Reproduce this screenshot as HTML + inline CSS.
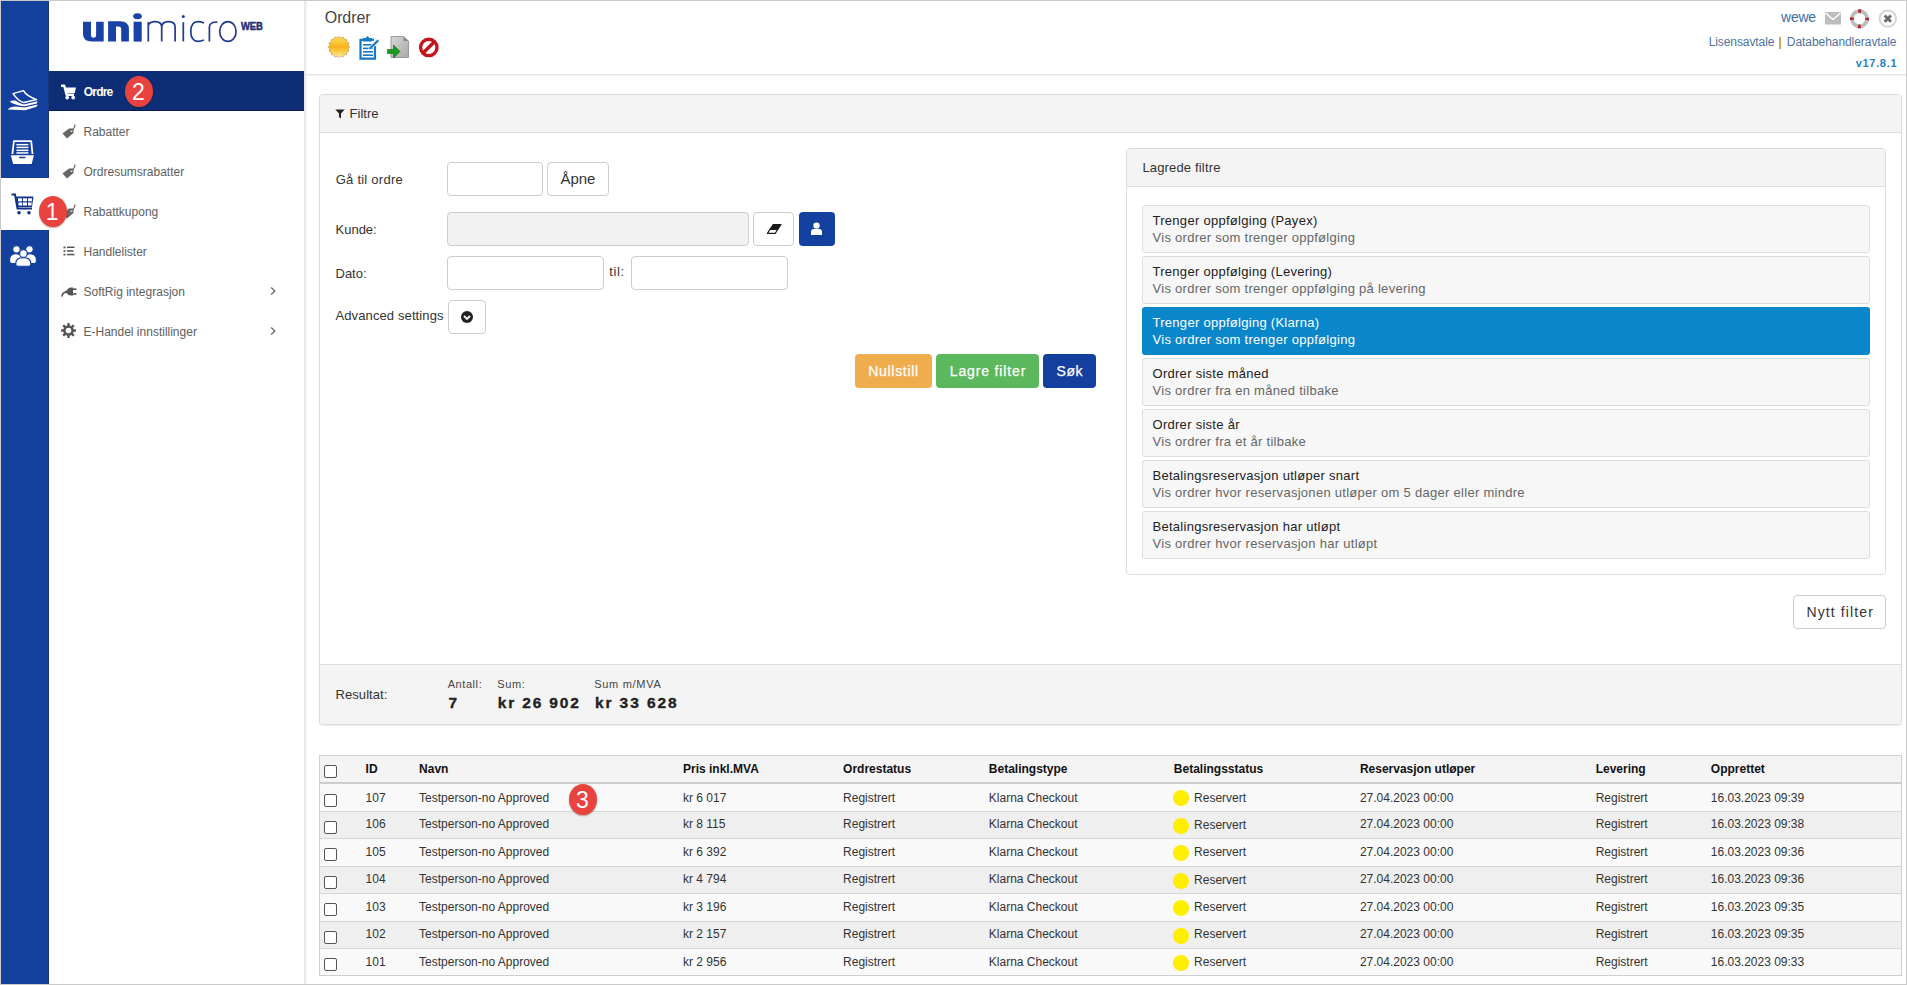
<!DOCTYPE html><html><head><meta charset="utf-8"><style>*{margin:0;padding:0}
html,body{width:1907px;height:985px;overflow:hidden;background:#fff;font-family:"Liberation Sans",sans-serif;}
.t{position:absolute;white-space:nowrap;line-height:1;}
.r{position:absolute;display:block;}
</style></head><body>
<div class="r" style="left:0px;top:0px;width:1907px;height:985px;border:1px solid #c9c9c9;box-sizing:border-box;background:#fff;"></div>
<div class="r" style="left:1px;top:1px;width:48px;height:983px;background:#133f9d;"></div>
<div class="r" style="left:48px;top:1px;width:1px;height:983px;background:#1a3778;"></div>
<div class="r" style="left:1px;top:178px;width:48px;height:52px;background:#fff;"></div>
<svg class="r" style="left:7px;top:88px;" width="32" height="24" viewBox="0 0 32 24"><path d="M6.1 5.6 L16.5 2.6 Q18.8 7.5 29.6 11.6 L16.8 14.6 Q10.5 12.5 6.1 5.6 Z" fill="none" stroke="#fff" stroke-width="1.5" stroke-linejoin="round"/>
<path d="M2.6 13.8 Q4.5 12.2 8.5 12.6 Q12 15.6 16.8 16.4 L30.6 13.2 L29.8 15.6 L17.6 18.3 Q9 17.5 2.6 13.8 Z" fill="#fff"/>
<path d="M0.8 21.4 Q3.5 18.6 8.5 18.6 L17.6 19.6 L30.6 16.6 L29.6 18.8 L18.2 22.2 Z" fill="#fff"/></svg>
<svg class="r" style="left:10px;top:140px;" width="25" height="25" viewBox="0 0 25 25"><path d="M2.4 14 L3.9 1.1 H21.2 L22.5 14" fill="none" stroke="#fff" stroke-width="1.8" stroke-linejoin="round"/>
<g fill="#fff"><rect x="6.4" y="3.9" width="12" height="1.5"/><rect x="6.4" y="6.7" width="12" height="1.5"/><rect x="6.4" y="9.6" width="12" height="1.5"/><rect x="6.4" y="12.2" width="12" height="1.5"/></g>
<path d="M0.9 15.2 H23.9 L21.7 23.9 H3.1 Z" fill="#fff"/><rect x="9" y="16.8" width="6.5" height="1.4" rx="0.6" fill="#1a3c8a"/></svg>
<svg class="r" style="left:10px;top:192px;" width="25" height="25" viewBox="0 0 25 25"><path d="M1.5 2.5 H5 L7.5 16.5 H22" fill="none" stroke="#13338a" stroke-width="2"/>
<path d="M6 4.5 H23.5 L22 15 H7.5 Z" fill="#13338a"/>
<g fill="#fff"><rect x="8" y="6.3" width="4" height="3"/><rect x="13" y="6.3" width="4" height="3"/><rect x="18" y="6.3" width="4" height="3"/>
<rect x="8.5" y="10.5" width="3.8" height="3"/><rect x="13" y="10.5" width="4" height="3"/><rect x="18" y="10.5" width="3.6" height="3"/></g>
<circle cx="9" cy="20.8" r="1.8" fill="#13338a"/><circle cx="19" cy="20.8" r="1.8" fill="#13338a"/></svg>
<svg class="r" style="left:9px;top:245px;" width="28" height="22" viewBox="0 0 28 22"><g fill="#fff" stroke="#133f9d" stroke-width="1.1">
<circle cx="7.5" cy="4.3" r="3.7"/><circle cx="20.5" cy="4.3" r="3.7"/>
<path d="M0.6 16.6 Q0.6 18.6 2.6 18.6 H13 V13.5 Q12 8.8 7 8.8 Q0.6 8.8 0.6 15 Z"/>
<path d="M27.4 16.6 Q27.4 18.6 25.4 18.6 H15 V13.5 Q16 8.8 21 8.8 Q27.4 8.8 27.4 15 Z"/>
<circle cx="14.4" cy="8.6" r="3.8"/>
<path d="M6.8 19.4 Q6.8 21.3 9 21.3 H19.6 Q21.8 21.3 21.8 19.4 V18.5 Q21.8 12.6 14.3 12.6 Q6.8 12.6 6.8 18.5 Z"/></g></svg>
<div class="r" style="left:49px;top:1px;width:255px;height:983px;background:#fff;"></div>
<div class="r" style="left:304px;top:1px;width:4px;height:983px;background:linear-gradient(to right,#e2e2e2,#f4f4f4 60%,#fff);"></div>
<svg class="r" style="left:0px;top:0px;" width="300" height="60" viewBox="0 0 300 60"><g fill="#1842a6">
<path d="M83 21.7 H91 V35 Q91 37.7 93.5 37.7 Q96.1 37.7 96.1 35 V21.7 H103.7 V41.6 H92 Q83 41.6 83 34 Z"/>
<path d="M108.1 41.6 V21.3 H120 Q128.9 21.3 128.9 29 V41.6 H121.2 V29 Q121.2 26.5 118.5 26.5 H116 V41.6 Z"/>
<rect x="133.6" y="21.7" width="8.1" height="19.9"/><ellipse cx="137.5" cy="16.2" rx="4.3" ry="3"/>
</g>
<g fill="none" stroke="#1e3a8c" stroke-width="1.7">
<path d="M148.3 41.4 V22 M148.3 25 Q150 21.6 155 21.6 Q161.7 21.6 161.7 27 V41.4 M161.7 27 Q162 21.6 168.5 21.6 Q175.1 21.6 175.1 27 V41.4"/>
<path d="M183.3 22.3 V41.4"/>
<path d="M204 23 Q201 21.6 198 21.6 Q190.8 21.6 190.8 31.5 Q190.8 41.3 198 41.3 Q201 41.3 204 40"/>
<path d="M209.4 41.4 V27 Q209.4 22 217.5 22"/>
<ellipse cx="227.9" cy="31.5" rx="8.2" ry="9.9"/>
</g>
<circle cx="183.3" cy="16.5" r="1.5" fill="#1e3a8c"/><text x="240.9" y="30.2" font-family="Liberation Sans" font-weight="bold" font-size="11.6" fill="#1f3276" stroke="#1f3276" stroke-width="0.55" textLength="22" lengthAdjust="spacingAndGlyphs">WEB</text></svg>
<div class="r" style="left:49px;top:71px;width:255px;height:40px;background:#0d2e76;"></div>
<div class="r" style="left:49px;top:109px;width:255px;height:1px;background:#132a6c;"></div>
<div class="r" style="left:49px;top:110px;width:255px;height:1px;background:#081d50;"></div>
<svg class="r" style="left:60px;top:84px;" width="17" height="16" viewBox="0 0 17 16"><path d="M1 1.8 H4.2 L6.6 10.8 H14" fill="none" stroke="#fff" stroke-width="2.4" stroke-linejoin="round"/>
<path d="M4.5 3.5 H16 L14.8 9 H5.8 Z" fill="#fff"/><circle cx="7.2" cy="13.6" r="1.9" fill="#fff"/><circle cx="13.2" cy="13.6" r="1.9" fill="#fff"/></svg>
<div class="t" style="left:83.70px;top:85.84px;font-size:12px;color:#fff;font-weight:bold;letter-spacing:-0.769px;">Ordre</div>
<div class="t" style="left:83.50px;top:125.84px;font-size:12px;color:#606060;">Rabatter</div>
<svg class="r" style="left:60.5px;top:124px;" width="16" height="16" viewBox="0 0 16 16"><path d="M1.5 9.5 L8 4.5 H12.5 V9 L6 14.5 Z" fill="#666"/><circle cx="10.5" cy="7" r="1" fill="#fff"/><path d="M10.5 7 Q14 4 14 0.5" fill="none" stroke="#666" stroke-width="1.1"/></svg>
<div class="t" style="left:83.50px;top:165.84px;font-size:12px;color:#606060;">Ordresumsrabatter</div>
<svg class="r" style="left:60.5px;top:164px;" width="16" height="16" viewBox="0 0 16 16"><path d="M1.5 9.5 L8 4.5 H12.5 V9 L6 14.5 Z" fill="#666"/><circle cx="10.5" cy="7" r="1" fill="#fff"/><path d="M10.5 7 Q14 4 14 0.5" fill="none" stroke="#666" stroke-width="1.1"/></svg>
<div class="t" style="left:83.50px;top:205.84px;font-size:12px;color:#606060;">Rabattkupong</div>
<svg class="r" style="left:60.5px;top:204px;" width="16" height="16" viewBox="0 0 16 16"><path d="M1.5 9.5 L8 4.5 H12.5 V9 L6 14.5 Z" fill="#666"/><circle cx="10.5" cy="7" r="1" fill="#fff"/><path d="M10.5 7 Q14 4 14 0.5" fill="none" stroke="#666" stroke-width="1.1"/></svg>
<div class="t" style="left:83.50px;top:245.84px;font-size:12px;color:#606060;">Handlelister</div>
<svg class="r" style="left:63px;top:246px;" width="12" height="10" viewBox="0 0 12 10"><g fill="#555"><rect x="0.5" y="0.5" width="2" height="1.8"/><rect x="0.5" y="4.1" width="2" height="1.8"/><rect x="0.5" y="7.7" width="2" height="1.8"/>
<rect x="4" y="0.5" width="7.5" height="1.5"/><rect x="4" y="4.2" width="6.5" height="1.5"/><rect x="4" y="7.8" width="7.5" height="1.5"/></g></svg>
<div class="t" style="left:83.50px;top:285.84px;font-size:12px;color:#606060;">SoftRig integrasjon</div>
<svg class="r" style="left:61px;top:286px;" width="16" height="11" viewBox="0 0 16 11"><path d="M1 10 Q1.5 6.5 5 6" fill="none" stroke="#555" stroke-width="1.6" stroke-linecap="round"/><path d="M4.5 4.5 H6 Q7 1.5 10 1.5 H12 V9.5 H10 Q7 9.5 6 7.2 H4.5 Z" fill="#555"/><rect x="12" y="2.4" width="3.5" height="1.6" fill="#555"/><rect x="12" y="7.2" width="3.5" height="1.6" fill="#555"/></svg>
<div class="t" style="left:83.50px;top:325.84px;font-size:12px;color:#606060;">E-Handel innstillinger</div>
<svg class="r" style="left:61px;top:323px;" width="15" height="15" viewBox="0 0 15 15"><g fill="#555"><rect x="6.3" y="0" width="2.4" height="4" rx="0.5" transform="rotate(0 7.5 7.5)"/><rect x="6.3" y="0" width="2.4" height="4" rx="0.5" transform="rotate(45 7.5 7.5)"/><rect x="6.3" y="0" width="2.4" height="4" rx="0.5" transform="rotate(90 7.5 7.5)"/><rect x="6.3" y="0" width="2.4" height="4" rx="0.5" transform="rotate(135 7.5 7.5)"/><rect x="6.3" y="0" width="2.4" height="4" rx="0.5" transform="rotate(180 7.5 7.5)"/><rect x="6.3" y="0" width="2.4" height="4" rx="0.5" transform="rotate(225 7.5 7.5)"/><rect x="6.3" y="0" width="2.4" height="4" rx="0.5" transform="rotate(270 7.5 7.5)"/><rect x="6.3" y="0" width="2.4" height="4" rx="0.5" transform="rotate(315 7.5 7.5)"/><circle cx="7.5" cy="7.5" r="5.3"/></g><circle cx="7.5" cy="7.5" r="2.8" fill="#fff"/></svg>
<svg class="r" style="left:269px;top:286px;" width="8" height="10" viewBox="0 0 8 10"><path d="M2.2 1.5 L5.8 5 L2.2 8.5" fill="none" stroke="#6a6a6a" stroke-width="1.4"/></svg>
<svg class="r" style="left:269px;top:326px;" width="8" height="10" viewBox="0 0 8 10"><path d="M2.2 1.5 L5.8 5 L2.2 8.5" fill="none" stroke="#6a6a6a" stroke-width="1.4"/></svg>
<div class="t" style="left:324.80px;top:10.46px;font-size:16px;color:#444;letter-spacing:-0.104px;">Ordrer</div>
<svg class="r" style="left:328px;top:36px;" width="22" height="22" viewBox="0 0 22 22"><defs><linearGradient id="sg" x1="0" y1="0" x2="0" y2="1"><stop offset="0" stop-color="#ffe05c"/><stop offset="0.5" stop-color="#f7b21c"/><stop offset="0.8" stop-color="#fcd860"/><stop offset="1" stop-color="#fff4c0"/></linearGradient></defs>
<polygon points="21.80,11.00 20.12,12.81 20.98,15.13 18.73,16.17 18.64,18.64 16.17,18.73 15.13,20.98 12.81,20.12 11.00,21.80 9.19,20.12 6.87,20.98 5.83,18.73 3.36,18.64 3.27,16.17 1.02,15.13 1.88,12.81 0.20,11.00 1.88,9.19 1.02,6.87 3.27,5.83 3.36,3.36 5.83,3.27 6.87,1.02 9.19,1.88 11.00,0.20 12.81,1.88 15.13,1.02 16.17,3.27 18.64,3.36 18.73,5.83 20.98,6.87 20.12,9.19" fill="url(#sg)" stroke="#c99a52" stroke-width="0.7"/></svg>
<svg class="r" style="left:358px;top:36px;" width="22" height="24" viewBox="0 0 22 24"><g fill="none" stroke="#1479c4" stroke-width="2.2">
<path d="M6 3.8 H2.5 V22.6 H17 V10"/><path d="M13 3.8 H16"/>
</g><path d="M5 2 H14 V5.5 H5 Z" fill="#1479c4"/><circle cx="9.5" cy="1.5" r="1.3" fill="#1479c4"/>
<g fill="#1479c4"><rect x="5" y="8" width="9" height="1.6"/><rect x="5" y="11.6" width="10" height="1.6"/><rect x="5" y="15" width="10" height="1.6"/><rect x="5" y="18.4" width="10" height="1.6"/></g>
<path d="M11 11.5 L19.5 3 L21.5 5 L13 13.5 L10.5 14 Z" fill="#1479c4" stroke="#fff" stroke-width="0.8"/></svg>
<svg class="r" style="left:387px;top:36px;" width="22" height="24" viewBox="0 0 22 24"><defs><linearGradient id="dg" x1="0" y1="0" x2="1" y2="1"><stop offset="0" stop-color="#d8d8d8"/><stop offset="1" stop-color="#a9a9a9"/></linearGradient></defs>
<path d="M4 0.5 H16.5 L21.5 5 V21.5 H4 Z" fill="url(#dg)" stroke="#8a8a8a" stroke-width="0.8"/><path d="M16.5 0.5 V5 H21.5" fill="#888"/>
<path d="M0.5 13.5 H6.5 V9 L13 15.5 L6.5 22 V17.5 H0.5 Z" fill="#1c9a1c" stroke="#0d6a0d" stroke-width="0.6"/></svg>
<svg class="r" style="left:418px;top:37px;" width="22" height="21" viewBox="0 0 22 21"><circle cx="10.8" cy="10.4" r="8.2" fill="none" stroke="#c4161c" stroke-width="3.4"/><path d="M5 16 L16.5 4.8" stroke="#c4161c" stroke-width="3.4"/></svg>
<div class="r" style="left:305px;top:74px;width:1601px;height:1px;background:#e6e6e6;"></div>
<div class="r" style="left:305px;top:75px;width:1601px;height:1px;background:#f3f3f3;"></div>
<div class="t" style="left:1781.10px;top:10.15px;font-size:14px;color:#3d6ea6;letter-spacing:-0.264px;">wewe</div>
<svg class="r" style="left:1825px;top:12px;" width="16" height="13" viewBox="0 0 16 13"><rect x="0" y="0" width="16" height="12.5" fill="#bdbdbd"/><path d="M0.5 1 L8 7.5 L15.5 1" fill="none" stroke="#fff" stroke-width="1.4"/></svg>
<svg class="r" style="left:1849px;top:9px;" width="21" height="20" viewBox="0 0 21 20"><circle cx="10.5" cy="9.8" r="7.6" fill="none" stroke="#bcbcbc" stroke-width="3.8"/>
<circle cx="10.5" cy="9.8" r="7.6" fill="none" stroke="#b3252a" stroke-width="3.8" stroke-dasharray="2.8 9.14" stroke-dashoffset="1.4"/></svg>
<svg class="r" style="left:1878px;top:9px;" width="20" height="20" viewBox="0 0 20 20"><circle cx="9.8" cy="9.6" r="8.2" fill="#fff" stroke="#d4d4d4" stroke-width="2"/><path d="M6.6 6.4 L13 12.8 M13 6.4 L6.6 12.8" stroke="#6a6a6a" stroke-width="2.8"/></svg>
<div class="t" style="left:1708.70px;top:35.84px;font-size:12px;color:#4f72a0;letter-spacing:-0.091px;">Lisensavtale</div>
<div class="r" style="left:1779px;top:37px;width:2px;height:12px;background:#d1a75a;"></div>
<div class="t" style="left:1786.80px;top:35.84px;font-size:12px;color:#4f72a0;letter-spacing:-0.058px;">Databehandleravtale</div>
<div class="t" style="left:1855.80px;top:57.69px;font-size:11px;color:#2b7fc1;font-weight:bold;letter-spacing:0.667px;">v17.8.1</div>
<div class="r" style="left:319px;top:94px;width:1583px;height:631px;background:#fff;border:1px solid #dadada;border-radius:4px;box-sizing:border-box;box-shadow:0 1px 2px rgba(0,0,0,0.08);"></div>
<div class="r" style="left:320px;top:95px;width:1581px;height:37px;background:#f4f4f4;border-radius:3px 3px 0 0;"></div>
<div class="r" style="left:320px;top:132px;width:1581px;height:1px;background:#dcdcdc;"></div>
<svg class="r" style="left:335px;top:109px;" width="10" height="10" viewBox="0 0 10 10"><path d="M0.3 0.5 H9.7 L6 4.5 V9.5 L4 8 V4.5 Z" fill="#222"/></svg>
<div class="t" style="left:349.50px;top:107.00px;font-size:13px;color:#333;letter-spacing:0.023px;">Filtre</div>
<div class="r" style="left:320px;top:664px;width:1581px;height:1px;background:#dcdcdc;"></div>
<div class="r" style="left:320px;top:665px;width:1581px;height:59px;background:#f4f4f4;border-radius:0 0 3px 3px;"></div>
<div class="t" style="left:335.70px;top:173.00px;font-size:13px;color:#333;letter-spacing:0.246px;">Gå til ordre</div>
<div class="r" style="left:447px;top:162px;width:96px;height:34px;background:#fff;border:1px solid #ccc;border-radius:4px;box-sizing:border-box;"></div>
<div class="r" style="left:547px;top:162px;width:62px;height:34px;background:#fff;border:1px solid #ccc;border-radius:4px;box-sizing:border-box;"></div>
<div class="t" style="left:560.40px;top:171.30px;font-size:15px;color:#333;letter-spacing:-0.010px;">Åpne</div>
<div class="t" style="left:335.50px;top:223.00px;font-size:13px;color:#333;">Kunde:</div>
<div class="r" style="left:447px;top:212px;width:302px;height:34px;background:#f2f2f2;border:1px solid #ccc;border-radius:4px;box-sizing:border-box;"></div>
<div class="r" style="left:753px;top:212px;width:41px;height:34px;background:#fff;border:1px solid #ccc;border-radius:4px;box-sizing:border-box;"></div>
<svg class="r" style="left:765px;top:223px;" width="18" height="12" viewBox="0 0 18 12"><path d="M8.2 1.5 H16 L10.2 10.3 H2.4 Z" fill="#fff" stroke="#1a1a1a" stroke-width="1.2" stroke-linejoin="round"/><path d="M8.2 1.5 H16 L12.3 7 H4.6 Z" fill="#1a1a1a"/></svg>
<div class="r" style="left:799px;top:212px;width:36px;height:34px;background:#1440a0;border-radius:4px;"></div>
<svg class="r" style="left:810px;top:222px;" width="13" height="14" viewBox="0 0 13 14"><circle cx="6.5" cy="3.6" r="3.2" fill="#fff"/><path d="M1 13 V10 Q1 7 4 7 H9 Q12 7 12 10 V13 Z" fill="#fff"/></svg>
<div class="t" style="left:335.50px;top:267.00px;font-size:13px;color:#333;">Dato:</div>
<div class="r" style="left:447px;top:256px;width:157px;height:34px;background:#fff;border:1px solid #ccc;border-radius:4px;box-sizing:border-box;"></div>
<div class="t" style="left:609.20px;top:265.00px;font-size:13px;color:#333;letter-spacing:0.600px;">til:</div>
<div class="r" style="left:631px;top:256px;width:157px;height:34px;background:#fff;border:1px solid #ccc;border-radius:4px;box-sizing:border-box;"></div>
<div class="t" style="left:335.50px;top:309.00px;font-size:13px;color:#333;letter-spacing:0.111px;">Advanced settings</div>
<div class="r" style="left:448px;top:300px;width:38px;height:34px;background:#fff;border:1px solid #ccc;border-radius:4px;box-sizing:border-box;"></div>
<svg class="r" style="left:460px;top:310px;" width="14" height="14" viewBox="0 0 14 14"><circle cx="7" cy="7" r="6" fill="#222"/><path d="M4 6 L7 9 L10 6" fill="none" stroke="#fff" stroke-width="1.8"/></svg>
<div class="r" style="left:855px;top:354px;width:77px;height:34px;background:#f0ad4e;border-radius:4px;"></div>
<div class="t" style="left:868.20px;top:364.15px;font-size:14px;color:#fff;letter-spacing:0.708px;-webkit-text-stroke:0.25px #fff;">Nullstill</div>
<div class="r" style="left:936px;top:354px;width:103px;height:34px;background:#5cb85c;border-radius:4px;"></div>
<div class="t" style="left:949.80px;top:364.15px;font-size:14px;color:#fff;letter-spacing:0.851px;-webkit-text-stroke:0.25px #fff;">Lagre filter</div>
<div class="r" style="left:1043px;top:354px;width:53px;height:34px;background:#143f9e;border-radius:4px;"></div>
<div class="t" style="left:1056.60px;top:364.15px;font-size:14px;color:#fff;letter-spacing:0.555px;-webkit-text-stroke:0.25px #fff;">Søk</div>
<div class="r" style="left:1126px;top:148px;width:760px;height:427px;background:#fff;border:1px solid #dcdcdc;border-radius:4px;box-sizing:border-box;"></div>
<div class="r" style="left:1127px;top:149px;width:758px;height:37px;background:#f4f4f4;border-radius:3px 3px 0 0;"></div>
<div class="r" style="left:1127px;top:186px;width:758px;height:1px;background:#dcdcdc;"></div>
<div class="t" style="left:1142.40px;top:161.00px;font-size:13px;color:#333;letter-spacing:0.164px;">Lagrede filtre</div>
<div class="r" style="left:1142px;top:205px;width:728px;height:48px;background:#f7f7f7;border:1px solid #dddddd;border-radius:3px;box-sizing:border-box;"></div>
<div class="t" style="left:1152.50px;top:214.00px;font-size:13px;color:#222;letter-spacing:0.28px;">Trenger oppfølging (Payex)</div>
<div class="t" style="left:1152.50px;top:230.50px;font-size:13px;color:#666;letter-spacing:0.28px;">Vis ordrer som trenger oppfølging</div>
<div class="r" style="left:1142px;top:256px;width:728px;height:48px;background:#f7f7f7;border:1px solid #dddddd;border-radius:3px;box-sizing:border-box;"></div>
<div class="t" style="left:1152.50px;top:265.00px;font-size:13px;color:#222;letter-spacing:0.28px;">Trenger oppfølging (Levering)</div>
<div class="t" style="left:1152.50px;top:281.50px;font-size:13px;color:#666;letter-spacing:0.28px;">Vis ordrer som trenger oppfølging på levering</div>
<div class="r" style="left:1142px;top:307px;width:728px;height:48px;background:#0a87cb;border-radius:3px;"></div>
<div class="t" style="left:1152.50px;top:316.00px;font-size:13px;color:#fff;letter-spacing:0.28px;">Trenger oppfølging (Klarna)</div>
<div class="t" style="left:1152.50px;top:332.50px;font-size:13px;color:#fff;letter-spacing:0.28px;">Vis ordrer som trenger oppfølging</div>
<div class="r" style="left:1142px;top:358px;width:728px;height:48px;background:#f7f7f7;border:1px solid #dddddd;border-radius:3px;box-sizing:border-box;"></div>
<div class="t" style="left:1152.50px;top:367.00px;font-size:13px;color:#222;letter-spacing:0.28px;">Ordrer siste måned</div>
<div class="t" style="left:1152.50px;top:383.50px;font-size:13px;color:#666;letter-spacing:0.28px;">Vis ordrer fra en måned tilbake</div>
<div class="r" style="left:1142px;top:409px;width:728px;height:48px;background:#f7f7f7;border:1px solid #dddddd;border-radius:3px;box-sizing:border-box;"></div>
<div class="t" style="left:1152.50px;top:418.00px;font-size:13px;color:#222;letter-spacing:0.28px;">Ordrer siste år</div>
<div class="t" style="left:1152.50px;top:434.50px;font-size:13px;color:#666;letter-spacing:0.28px;">Vis ordrer fra et år tilbake</div>
<div class="r" style="left:1142px;top:460px;width:728px;height:48px;background:#f7f7f7;border:1px solid #dddddd;border-radius:3px;box-sizing:border-box;"></div>
<div class="t" style="left:1152.50px;top:469.00px;font-size:13px;color:#222;letter-spacing:0.28px;">Betalingsreservasjon utløper snart</div>
<div class="t" style="left:1152.50px;top:485.50px;font-size:13px;color:#666;letter-spacing:0.28px;">Vis ordrer hvor reservasjonen utløper om 5 dager eller mindre</div>
<div class="r" style="left:1142px;top:511px;width:728px;height:48px;background:#f7f7f7;border:1px solid #dddddd;border-radius:3px;box-sizing:border-box;"></div>
<div class="t" style="left:1152.50px;top:520.00px;font-size:13px;color:#222;letter-spacing:0.28px;">Betalingsreservasjon har utløpt</div>
<div class="t" style="left:1152.50px;top:536.50px;font-size:13px;color:#666;letter-spacing:0.28px;">Vis ordrer hvor reservasjon har utløpt</div>
<div class="r" style="left:1793px;top:595px;width:93px;height:34px;background:#fff;border:1px solid #ccc;border-radius:4px;box-sizing:border-box;"></div>
<div class="t" style="left:1806.40px;top:605.15px;font-size:14px;color:#333;letter-spacing:1.127px;">Nytt filter</div>
<div class="t" style="left:335.60px;top:688.00px;font-size:13px;color:#333;letter-spacing:0.050px;">Resultat:</div>
<div class="t" style="left:447.70px;top:678.69px;font-size:11px;color:#444;letter-spacing:0.571px;">Antall:</div>
<div class="t" style="left:497.30px;top:678.69px;font-size:11px;color:#444;letter-spacing:0.642px;">Sum:</div>
<div class="t" style="left:594.20px;top:678.69px;font-size:11px;color:#444;letter-spacing:0.711px;">Sum m/MVA</div>
<div class="t" style="left:448.40px;top:695.08px;font-size:15.5px;color:#222;font-weight:bold;-webkit-text-stroke:0.35px #222;">7</div>
<div class="t" style="left:497.70px;top:695.08px;font-size:15.5px;color:#222;font-weight:bold;letter-spacing:1.855px;-webkit-text-stroke:0.35px #222;">kr 26 902</div>
<div class="t" style="left:594.90px;top:695.08px;font-size:15.5px;color:#222;font-weight:bold;letter-spacing:1.917px;-webkit-text-stroke:0.35px #222;">kr 33 628</div>
<div class="r" style="left:319px;top:755px;width:1583px;height:221px;background:#fff;border:1px solid #cfcfcf;box-sizing:border-box;"></div>
<div class="r" style="left:320px;top:756px;width:1581px;height:26px;background:#f4f4f4;"></div>
<div class="r" style="left:320px;top:782px;width:1581px;height:2px;background:#cdcdcd;"></div>
<div class="r" style="left:324px;top:765px;width:13px;height:13px;background:#fff;border:1px solid #555;border-radius:2px;box-sizing:border-box;"></div>
<div class="t" style="left:365.60px;top:762.84px;font-size:12px;color:#111;font-weight:bold;">ID</div>
<div class="t" style="left:419.10px;top:762.84px;font-size:12px;color:#111;font-weight:bold;">Navn</div>
<div class="t" style="left:683.00px;top:762.84px;font-size:12px;color:#111;font-weight:bold;">Pris inkl.MVA</div>
<div class="t" style="left:843.10px;top:762.84px;font-size:12px;color:#111;font-weight:bold;">Ordrestatus</div>
<div class="t" style="left:988.80px;top:762.84px;font-size:12px;color:#111;font-weight:bold;">Betalingstype</div>
<div class="t" style="left:1173.80px;top:762.84px;font-size:12px;color:#111;font-weight:bold;">Betalingsstatus</div>
<div class="t" style="left:1359.90px;top:762.84px;font-size:12px;color:#111;font-weight:bold;">Reservasjon utløper</div>
<div class="t" style="left:1595.70px;top:762.84px;font-size:12px;color:#111;font-weight:bold;">Levering</div>
<div class="t" style="left:1710.80px;top:762.84px;font-size:12px;color:#111;font-weight:bold;">Opprettet</div>
<div class="r" style="left:320px;top:784px;width:1581px;height:27px;background:#f9f9f9;"></div>
<div class="r" style="left:320px;top:811px;width:1581px;height:1px;background:#d6d6d6;"></div>
<div class="r" style="left:324px;top:793.5px;width:13px;height:13.0px;background:#fff;border:1px solid #555;border-radius:2px;box-sizing:border-box;"></div>
<div class="t" style="left:365.60px;top:791.64px;font-size:12px;color:#333;">107</div>
<div class="t" style="left:419.10px;top:791.64px;font-size:12px;color:#333;">Testperson-no Approved</div>
<div class="t" style="left:683.00px;top:791.64px;font-size:12px;color:#333;">kr 6 017</div>
<div class="t" style="left:843.10px;top:791.64px;font-size:12px;color:#333;">Registrert</div>
<div class="t" style="left:988.80px;top:791.64px;font-size:12px;color:#333;">Klarna Checkout</div>
<div class="r" style="left:1173px;top:790px;width:16px;height:16px;background:#ffee00;border-radius:50%;"></div>
<div class="t" style="left:1194.10px;top:792.14px;font-size:12px;color:#333;">Reservert</div>
<div class="t" style="left:1359.90px;top:791.64px;font-size:12px;color:#333;">27.04.2023 00:00</div>
<div class="t" style="left:1595.70px;top:791.64px;font-size:12px;color:#333;">Registrert</div>
<div class="t" style="left:1710.80px;top:791.64px;font-size:12px;color:#333;">16.03.2023 09:39</div>
<div class="r" style="left:320px;top:812px;width:1581px;height:26px;background:#efefef;"></div>
<div class="r" style="left:320px;top:838px;width:1581px;height:1px;background:#d6d6d6;"></div>
<div class="r" style="left:324px;top:821px;width:13px;height:13px;background:#fff;border:1px solid #555;border-radius:2px;box-sizing:border-box;"></div>
<div class="t" style="left:365.60px;top:818.34px;font-size:12px;color:#333;">106</div>
<div class="t" style="left:419.10px;top:818.34px;font-size:12px;color:#333;">Testperson-no Approved</div>
<div class="t" style="left:683.00px;top:818.34px;font-size:12px;color:#333;">kr 8 115</div>
<div class="t" style="left:843.10px;top:818.34px;font-size:12px;color:#333;">Registrert</div>
<div class="t" style="left:988.80px;top:818.34px;font-size:12px;color:#333;">Klarna Checkout</div>
<div class="r" style="left:1173px;top:818px;width:16px;height:16px;background:#ffee00;border-radius:50%;"></div>
<div class="t" style="left:1194.10px;top:818.84px;font-size:12px;color:#333;">Reservert</div>
<div class="t" style="left:1359.90px;top:818.34px;font-size:12px;color:#333;">27.04.2023 00:00</div>
<div class="t" style="left:1595.70px;top:818.34px;font-size:12px;color:#333;">Registrert</div>
<div class="t" style="left:1710.80px;top:818.34px;font-size:12px;color:#333;">16.03.2023 09:38</div>
<div class="r" style="left:320px;top:839px;width:1581px;height:27px;background:#f9f9f9;"></div>
<div class="r" style="left:320px;top:866px;width:1581px;height:1px;background:#d6d6d6;"></div>
<div class="r" style="left:324px;top:848px;width:13px;height:13px;background:#fff;border:1px solid #555;border-radius:2px;box-sizing:border-box;"></div>
<div class="t" style="left:365.60px;top:845.54px;font-size:12px;color:#333;">105</div>
<div class="t" style="left:419.10px;top:845.54px;font-size:12px;color:#333;">Testperson-no Approved</div>
<div class="t" style="left:683.00px;top:845.54px;font-size:12px;color:#333;">kr 6 392</div>
<div class="t" style="left:843.10px;top:845.54px;font-size:12px;color:#333;">Registrert</div>
<div class="t" style="left:988.80px;top:845.54px;font-size:12px;color:#333;">Klarna Checkout</div>
<div class="r" style="left:1173px;top:845px;width:16px;height:16px;background:#ffee00;border-radius:50%;"></div>
<div class="t" style="left:1194.10px;top:846.04px;font-size:12px;color:#333;">Reservert</div>
<div class="t" style="left:1359.90px;top:845.54px;font-size:12px;color:#333;">27.04.2023 00:00</div>
<div class="t" style="left:1595.70px;top:845.54px;font-size:12px;color:#333;">Registrert</div>
<div class="t" style="left:1710.80px;top:845.54px;font-size:12px;color:#333;">16.03.2023 09:36</div>
<div class="r" style="left:320px;top:867px;width:1581px;height:26px;background:#efefef;"></div>
<div class="r" style="left:320px;top:893px;width:1581px;height:1px;background:#d6d6d6;"></div>
<div class="r" style="left:324px;top:876px;width:13px;height:13px;background:#fff;border:1px solid #555;border-radius:2px;box-sizing:border-box;"></div>
<div class="t" style="left:365.60px;top:873.34px;font-size:12px;color:#333;">104</div>
<div class="t" style="left:419.10px;top:873.34px;font-size:12px;color:#333;">Testperson-no Approved</div>
<div class="t" style="left:683.00px;top:873.34px;font-size:12px;color:#333;">kr 4 794</div>
<div class="t" style="left:843.10px;top:873.34px;font-size:12px;color:#333;">Registrert</div>
<div class="t" style="left:988.80px;top:873.34px;font-size:12px;color:#333;">Klarna Checkout</div>
<div class="r" style="left:1173px;top:873px;width:16px;height:16px;background:#ffee00;border-radius:50%;"></div>
<div class="t" style="left:1194.10px;top:873.84px;font-size:12px;color:#333;">Reservert</div>
<div class="t" style="left:1359.90px;top:873.34px;font-size:12px;color:#333;">27.04.2023 00:00</div>
<div class="t" style="left:1595.70px;top:873.34px;font-size:12px;color:#333;">Registrert</div>
<div class="t" style="left:1710.80px;top:873.34px;font-size:12px;color:#333;">16.03.2023 09:36</div>
<div class="r" style="left:320px;top:894px;width:1581px;height:27px;background:#f9f9f9;"></div>
<div class="r" style="left:320px;top:921px;width:1581px;height:1px;background:#d6d6d6;"></div>
<div class="r" style="left:324px;top:903px;width:13px;height:13px;background:#fff;border:1px solid #555;border-radius:2px;box-sizing:border-box;"></div>
<div class="t" style="left:365.60px;top:900.54px;font-size:12px;color:#333;">103</div>
<div class="t" style="left:419.10px;top:900.54px;font-size:12px;color:#333;">Testperson-no Approved</div>
<div class="t" style="left:683.00px;top:900.54px;font-size:12px;color:#333;">kr 3 196</div>
<div class="t" style="left:843.10px;top:900.54px;font-size:12px;color:#333;">Registrert</div>
<div class="t" style="left:988.80px;top:900.54px;font-size:12px;color:#333;">Klarna Checkout</div>
<div class="r" style="left:1173px;top:900px;width:16px;height:16px;background:#ffee00;border-radius:50%;"></div>
<div class="t" style="left:1194.10px;top:901.04px;font-size:12px;color:#333;">Reservert</div>
<div class="t" style="left:1359.90px;top:900.54px;font-size:12px;color:#333;">27.04.2023 00:00</div>
<div class="t" style="left:1595.70px;top:900.54px;font-size:12px;color:#333;">Registrert</div>
<div class="t" style="left:1710.80px;top:900.54px;font-size:12px;color:#333;">16.03.2023 09:35</div>
<div class="r" style="left:320px;top:922px;width:1581px;height:26px;background:#efefef;"></div>
<div class="r" style="left:320px;top:948px;width:1581px;height:1px;background:#d6d6d6;"></div>
<div class="r" style="left:324px;top:931px;width:13px;height:13px;background:#fff;border:1px solid #555;border-radius:2px;box-sizing:border-box;"></div>
<div class="t" style="left:365.60px;top:927.64px;font-size:12px;color:#333;">102</div>
<div class="t" style="left:419.10px;top:927.64px;font-size:12px;color:#333;">Testperson-no Approved</div>
<div class="t" style="left:683.00px;top:927.64px;font-size:12px;color:#333;">kr 2 157</div>
<div class="t" style="left:843.10px;top:927.64px;font-size:12px;color:#333;">Registrert</div>
<div class="t" style="left:988.80px;top:927.64px;font-size:12px;color:#333;">Klarna Checkout</div>
<div class="r" style="left:1173px;top:928px;width:16px;height:16px;background:#ffee00;border-radius:50%;"></div>
<div class="t" style="left:1194.10px;top:928.14px;font-size:12px;color:#333;">Reservert</div>
<div class="t" style="left:1359.90px;top:927.64px;font-size:12px;color:#333;">27.04.2023 00:00</div>
<div class="t" style="left:1595.70px;top:927.64px;font-size:12px;color:#333;">Registrert</div>
<div class="t" style="left:1710.80px;top:927.64px;font-size:12px;color:#333;">16.03.2023 09:35</div>
<div class="r" style="left:320px;top:949px;width:1581px;height:26px;background:#f9f9f9;"></div>
<div class="r" style="left:324px;top:958px;width:13px;height:13px;background:#fff;border:1px solid #555;border-radius:2px;box-sizing:border-box;"></div>
<div class="t" style="left:365.60px;top:955.84px;font-size:12px;color:#333;">101</div>
<div class="t" style="left:419.10px;top:955.84px;font-size:12px;color:#333;">Testperson-no Approved</div>
<div class="t" style="left:683.00px;top:955.84px;font-size:12px;color:#333;">kr 2 956</div>
<div class="t" style="left:843.10px;top:955.84px;font-size:12px;color:#333;">Registrert</div>
<div class="t" style="left:988.80px;top:955.84px;font-size:12px;color:#333;">Klarna Checkout</div>
<div class="r" style="left:1173px;top:955px;width:16px;height:16px;background:#ffee00;border-radius:50%;"></div>
<div class="t" style="left:1194.10px;top:956.34px;font-size:12px;color:#333;">Reservert</div>
<div class="t" style="left:1359.90px;top:955.84px;font-size:12px;color:#333;">27.04.2023 00:00</div>
<div class="t" style="left:1595.70px;top:955.84px;font-size:12px;color:#333;">Registrert</div>
<div class="t" style="left:1710.80px;top:955.84px;font-size:12px;color:#333;">16.03.2023 09:33</div>
<div class="r" style="left:124.8px;top:75.8px;width:28.5px;height:31.5px;background:#e8433f;border-radius:50%;box-shadow:0 1px 1.5px rgba(60,0,0,0.35);"></div>
<div class="t" style="left:118.3px;top:81.1px;width:40px;text-align:center;font-size:23px;color:#fff;">2</div>
<div class="r" style="left:38.6px;top:195.8px;width:28.5px;height:31.5px;background:#e8433f;border-radius:50%;box-shadow:0 1px 1.5px rgba(60,0,0,0.35);"></div>
<div class="t" style="left:32.1px;top:201.1px;width:40px;text-align:center;font-size:23px;color:#fff;">1</div>
<div class="r" style="left:568.9px;top:783.8px;width:28.5px;height:31.5px;background:#e8433f;border-radius:50%;box-shadow:0 1px 1.5px rgba(60,0,0,0.35);"></div>
<div class="t" style="left:562.3px;top:789.1px;width:40px;text-align:center;font-size:23px;color:#fff;">3</div>
</body></html>
